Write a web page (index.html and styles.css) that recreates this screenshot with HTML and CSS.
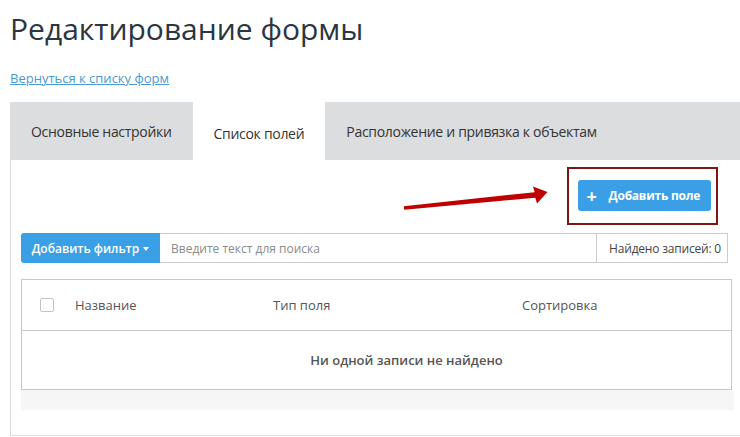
FILE: index.html
```html
<!DOCTYPE html>
<html lang="ru">
<head>
    <meta charset="UTF-8">
    <meta name="viewport" content="width=device-width, initial-scale=1.0">
    <title>Редактирование формы</title>
    <link rel="stylesheet" href="styles.css">
</head>
<body>
    <h1>Редактирование формы</h1>
    <a class="back-link" href="#">Вернуться к списку форм</a>

    <div class="tabs">
        <div class="tab">Основные настройки</div>
        <div class="tab active">Список полей</div>
        <div class="tab tab-wide">Расположение и привязка к объектам</div>
    </div>

    <div class="panel">
        <div class="toolbar">
            <button class="add-button"><span class="plus">+</span>Добавить поле</button>
        </div>

        <div class="search-row">
            <button class="filter-button">Добавить фильтр <span class="caret"></span></button>
            <input class="search-input" type="text" placeholder="Введите текст для поиска">
            <div class="found">Найдено записей: 0</div>
        </div>

        <div class="grid">
            <div class="grid-head">
                <div class="cell-check"><span class="checkbox"></span></div>
                <div>Название</div>
                <div>Тип поля</div>
                <div>Сортировка</div>
            </div>
            <div class="grid-empty">Ни одной записи не найдено</div>
        </div>
        <div class="grid-footer"></div>

        <!-- annotation -->
        <div class="highlight"></div>
        <svg class="arrow" width="152" height="32" viewBox="0 0 152 32">
            <polygon fill="#bf0000" points="2.8,23.3 133.7,9.2 132,3.5 146.5,9 136,20.5 134.3,14.8 3.2,26.7"/>
        </svg>
    </div>
</body>
</html>
```

FILE: styles.css
```css
body {
    margin: 0;
    font-family: "Open Sans", Arial, sans-serif;
    color: #333;
    background: #fff;
    overflow: hidden;
}
h1 {
    margin: 9px 0 0 10px;
    font-size: 30px;
    font-weight: 400;
    line-height: 40px;
    color: #2b3640;
}
.back-link {
    display: inline-block;
    margin: 20px 0 0 10px;
    font-size: 13px;
    line-height: 18px;
    color: #4a9ad4;
    text-decoration: underline;
}
.tabs {
    display: flex;
    margin: 14px 0 0 10px;
    height: 58px;
}
.tab {
    display: flex;
    align-items: center;
    padding: 0 21px 0 21px;
    background-color: #dcdddf;
    font-size: 14px;
    letter-spacing: -0.3px;
    color: #333;
}
.tab.active {
    background-color: #fff;
    padding-top: 4px;
}
.tab-wide {
    flex: 1;
}
.panel {
    position: relative;
    margin-left: 10px;
    border-left: 1px solid #ddd;
    border-bottom: 1px solid #ddd;
    padding: 20px 0 25px 10px;
}
.toolbar {
    display: flex;
    justify-content: flex-end;
    margin-right: 29px;
}
.add-button {
    display: flex;
    align-items: center;
    height: 31px;
    padding: 0 11px 0 8px;
    border: none;
    border-radius: 3px;
    background-color: #3a9fe5;
    color: #fff;
    font-family: inherit;
    font-size: 12px;
    font-weight: 700;
    letter-spacing: -0.25px;
}
.plus {
    font-size: 18px;
    font-weight: 700;
    margin-right: 12px;
    line-height: 1;
}
.search-row {
    display: flex;
    height: 30px;
    margin: 22px 12px 0 0;
}
.filter-button {
    width: 139px;
    border: none;
    border-radius: 3px 0 0 3px;
    background-color: #3a9fe5;
    color: #fff;
    font-family: inherit;
    font-size: 12px;
    font-weight: 600;
    padding: 0;
}
.caret {
    display: inline-block;
    width: 0;
    height: 0;
    border-left: 3px solid transparent;
    border-right: 3px solid transparent;
    border-top: 4px solid #fff;
    vertical-align: middle;
    margin-left: 1px;
}
.search-input {
    flex: 1;
    min-width: 0;
    border: 1px solid #ccc;
    border-left: none;
    padding: 0 11px;
    font-family: inherit;
    font-size: 12px;
    color: #333;
}
.search-input::placeholder {
    color: #8a8a8a;
}
.found {
    display: flex;
    align-items: center;
    padding: 0 6px 0 12px;
    border: 1px solid #ccc;
    border-left: none;
    font-size: 12px;
    letter-spacing: -0.2px;
    color: #444;
}
.grid {
    margin: 16px 8px 0 0;
    border: 1px solid #c8c8c8;
}
.grid-head {
    display: grid;
    grid-template-columns: 53px 198px 249px 1fr;
    align-items: center;
    height: 50px;
    border-bottom: 1px solid #c8c8c8;
    font-size: 13px;
    color: #555;
}
.cell-check {
    padding-left: 18px;
    display: flex;
}
.checkbox {
    width: 12px;
    height: 12px;
    border: 1px solid #c4c4c4;
    border-radius: 2px;
}
.grid-empty {
    height: 58px;
    display: flex;
    align-items: center;
    justify-content: center;
    padding-left: 60px;
    font-size: 13px;
    font-weight: 600;
    color: #555;
}
.grid-footer {
    height: 20px;
    margin-right: 6px;
    background-color: #f6f6f6;
}
.highlight {
    position: absolute;
    left: 556px;
    top: 7px;
    width: 147px;
    height: 54px;
    border: 2px solid #841515;
}
.arrow {
    position: absolute;
    left: 390px;
    top: 23px;
}
```
